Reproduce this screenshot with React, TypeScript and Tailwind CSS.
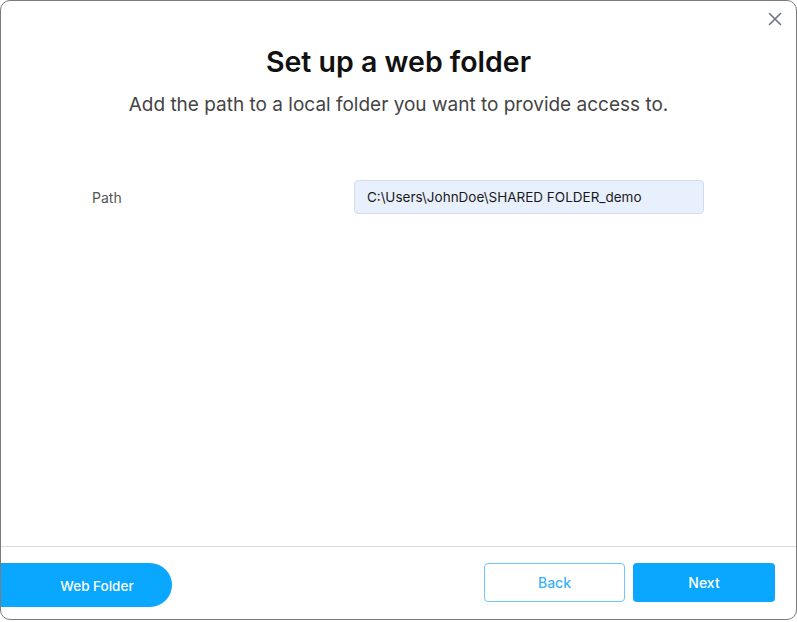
import React from "react";

export default function App() {
  return (
    <div className="w-[797px] h-[622px] bg-white" style={{ fontFamily: "Inter, 'Noto Sans', sans-serif" }}>
      <div className="w-[797px] h-[620px] border border-[#7b7b7b] rounded-[10px] overflow-hidden flex flex-col bg-white">
        <div className="flex justify-end pt-[10px] pr-[14px] h-[44px]">
          <svg width="14" height="14" viewBox="0 0 14 14" className="mt-[1px]">
            <path d="M1.5 1.5 L12.5 12.5 M12.5 1.5 L1.5 12.5" stroke="#6b7280" strokeWidth="1.6" strokeLinecap="round" />
          </svg>
        </div>
        <h1 className="text-center text-[28.5px] leading-[34px] font-semibold text-[#111]">Set up a web folder</h1>
        <p className="text-center text-[19px] leading-[24px] text-[#444] mt-[14px]">
          Add the path to a local folder you want to provide access to.
        </p>
        <div className="flex items-center mt-[63px]">
          <div className="w-[353px] pl-[91px] text-[14px] text-[#555]">Path</div>
          <div className="w-[350px] h-[34px] bg-[#e9f0fd] border border-[#d6dce6] rounded-[4px] flex items-center px-[12px] text-[13.5px] text-[#1a1a1a]">
            C:\Users\JohnDoe\SHARED FOLDER_demo
          </div>
        </div>
        <div className="flex-1" />
        <div className="h-[73px] border-t border-[#dcdcdc] flex items-start pt-[16px]">
          <div className="w-[172px] h-[44px] bg-[#0aa7ff] rounded-r-full flex items-center justify-center pl-[22px] pt-[2px] text-white text-[13.5px] font-medium ml-[-1px]">
            Web Folder
          </div>
          <div className="flex-1" />
          <div className="w-[141px] h-[39px] border border-[#6cc6ff] rounded-[4px] flex items-center justify-center text-[#3bb2f6] text-[14px] font-medium">
            Back
          </div>
          <div className="w-[142px] h-[39px] bg-[#0aa7ff] rounded-[4px] flex items-center justify-center text-white text-[14px] font-medium ml-[8px] mr-[21px]">
            Next
          </div>
        </div>
      </div>
    </div>
  );
}
